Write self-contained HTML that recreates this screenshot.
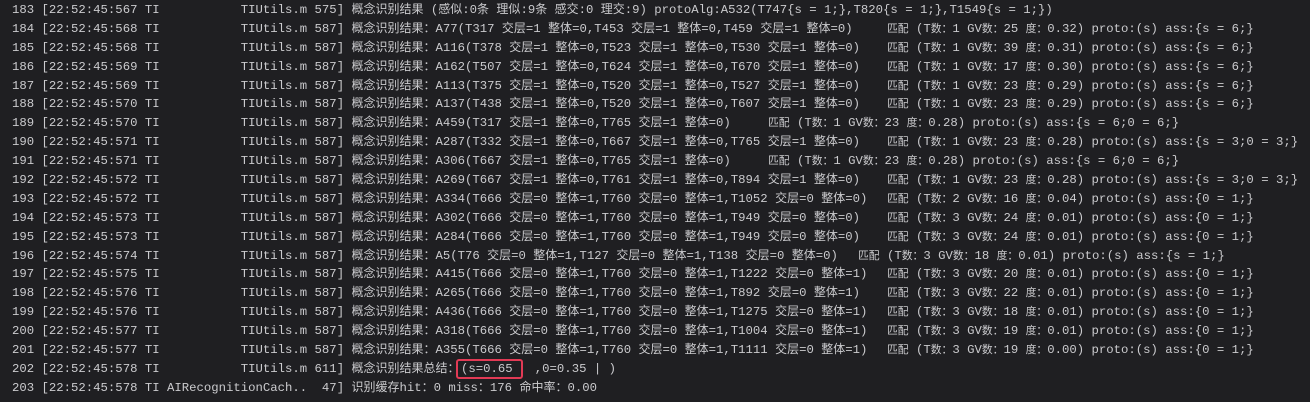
<!DOCTYPE html>
<html><head><meta charset="utf-8"><style>
html,body{margin:0;padding:0;background:#1f1f22;width:1310px;height:401px;overflow:hidden}
body{font-family:"Liberation Mono","Noto Sans CJK SC",monospace;font-size:12.3px;color:#cbcbce;padding-top:1px}
.l{position:relative;height:18.9px;line-height:18.9px;white-space:pre;padding-left:12px}
.r{position:absolute;top:0}
i{font-style:normal;font-size:12px}
.r i{font-size:10.8px}
.box{position:absolute;left:456px;top:359px;width:67px;height:20px;border:2px solid #e23a55;border-radius:3px;box-sizing:border-box}
</style></head><body>
<div class="l">183 [22:52:45:567 TI           TIUtils.m 575] <i>概念识别结果</i> (<i>感似</i>:0<i>条</i> <i>理似</i>:9<i>条</i> <i>感交</i>:0 <i>理交</i>:9) protoAlg:A532(T747{s = 1;},T820{s = 1;},T1549{s = 1;})</div>
<div class="l">184 [22:52:45:568 TI           TIUtils.m 587] <i>概念识别结果：</i>A77(T317 <i>交层</i>=1 <i>整体</i>=0,T453 <i>交层</i>=1 <i>整体</i>=0,T459 <i>交层</i>=1 <i>整体</i>=0)<span class="r" style="left:887px"><i>匹配</i> (T<i>数：</i>1 GV<i>数：</i>25 <i>度：</i>0.32) proto:(s) ass:{s = 6;}</span></div>
<div class="l">185 [22:52:45:568 TI           TIUtils.m 587] <i>概念识别结果：</i>A116(T378 <i>交层</i>=1 <i>整体</i>=0,T523 <i>交层</i>=1 <i>整体</i>=0,T530 <i>交层</i>=1 <i>整体</i>=0)<span class="r" style="left:887px"><i>匹配</i> (T<i>数：</i>1 GV<i>数：</i>39 <i>度：</i>0.31) proto:(s) ass:{s = 6;}</span></div>
<div class="l">186 [22:52:45:569 TI           TIUtils.m 587] <i>概念识别结果：</i>A162(T507 <i>交层</i>=1 <i>整体</i>=0,T624 <i>交层</i>=1 <i>整体</i>=0,T670 <i>交层</i>=1 <i>整体</i>=0)<span class="r" style="left:887px"><i>匹配</i> (T<i>数：</i>1 GV<i>数：</i>17 <i>度：</i>0.30) proto:(s) ass:{s = 6;}</span></div>
<div class="l">187 [22:52:45:569 TI           TIUtils.m 587] <i>概念识别结果：</i>A113(T375 <i>交层</i>=1 <i>整体</i>=0,T520 <i>交层</i>=1 <i>整体</i>=0,T527 <i>交层</i>=1 <i>整体</i>=0)<span class="r" style="left:887px"><i>匹配</i> (T<i>数：</i>1 GV<i>数：</i>23 <i>度：</i>0.29) proto:(s) ass:{s = 6;}</span></div>
<div class="l">188 [22:52:45:570 TI           TIUtils.m 587] <i>概念识别结果：</i>A137(T438 <i>交层</i>=1 <i>整体</i>=0,T520 <i>交层</i>=1 <i>整体</i>=0,T607 <i>交层</i>=1 <i>整体</i>=0)<span class="r" style="left:887px"><i>匹配</i> (T<i>数：</i>1 GV<i>数：</i>23 <i>度：</i>0.29) proto:(s) ass:{s = 6;}</span></div>
<div class="l">189 [22:52:45:570 TI           TIUtils.m 587] <i>概念识别结果：</i>A459(T317 <i>交层</i>=1 <i>整体</i>=0,T765 <i>交层</i>=1 <i>整体</i>=0)<span class="r" style="left:768px"><i>匹配</i> (T<i>数：</i>1 GV<i>数：</i>23 <i>度：</i>0.28) proto:(s) ass:{s = 6;0 = 6;}</span></div>
<div class="l">190 [22:52:45:571 TI           TIUtils.m 587] <i>概念识别结果：</i>A287(T332 <i>交层</i>=1 <i>整体</i>=0,T667 <i>交层</i>=1 <i>整体</i>=0,T765 <i>交层</i>=1 <i>整体</i>=0)<span class="r" style="left:887px"><i>匹配</i> (T<i>数：</i>1 GV<i>数：</i>23 <i>度：</i>0.28) proto:(s) ass:{s = 3;0 = 3;}</span></div>
<div class="l">191 [22:52:45:571 TI           TIUtils.m 587] <i>概念识别结果：</i>A306(T667 <i>交层</i>=1 <i>整体</i>=0,T765 <i>交层</i>=1 <i>整体</i>=0)<span class="r" style="left:768px"><i>匹配</i> (T<i>数：</i>1 GV<i>数：</i>23 <i>度：</i>0.28) proto:(s) ass:{s = 6;0 = 6;}</span></div>
<div class="l">192 [22:52:45:572 TI           TIUtils.m 587] <i>概念识别结果：</i>A269(T667 <i>交层</i>=1 <i>整体</i>=0,T761 <i>交层</i>=1 <i>整体</i>=0,T894 <i>交层</i>=1 <i>整体</i>=0)<span class="r" style="left:887px"><i>匹配</i> (T<i>数：</i>1 GV<i>数：</i>23 <i>度：</i>0.28) proto:(s) ass:{s = 3;0 = 3;}</span></div>
<div class="l">193 [22:52:45:572 TI           TIUtils.m 587] <i>概念识别结果：</i>A334(T666 <i>交层</i>=0 <i>整体</i>=1,T760 <i>交层</i>=0 <i>整体</i>=1,T1052 <i>交层</i>=0 <i>整体</i>=0)<span class="r" style="left:887px"><i>匹配</i> (T<i>数：</i>2 GV<i>数：</i>16 <i>度：</i>0.04) proto:(s) ass:{0 = 1;}</span></div>
<div class="l">194 [22:52:45:573 TI           TIUtils.m 587] <i>概念识别结果：</i>A302(T666 <i>交层</i>=0 <i>整体</i>=1,T760 <i>交层</i>=0 <i>整体</i>=1,T949 <i>交层</i>=0 <i>整体</i>=0)<span class="r" style="left:887px"><i>匹配</i> (T<i>数：</i>3 GV<i>数：</i>24 <i>度：</i>0.01) proto:(s) ass:{0 = 1;}</span></div>
<div class="l">195 [22:52:45:573 TI           TIUtils.m 587] <i>概念识别结果：</i>A284(T666 <i>交层</i>=0 <i>整体</i>=1,T760 <i>交层</i>=0 <i>整体</i>=1,T949 <i>交层</i>=0 <i>整体</i>=0)<span class="r" style="left:887px"><i>匹配</i> (T<i>数：</i>3 GV<i>数：</i>24 <i>度：</i>0.01) proto:(s) ass:{0 = 1;}</span></div>
<div class="l">196 [22:52:45:574 TI           TIUtils.m 587] <i>概念识别结果：</i>A5(T76 <i>交层</i>=0 <i>整体</i>=1,T127 <i>交层</i>=0 <i>整体</i>=1,T138 <i>交层</i>=0 <i>整体</i>=0)<span class="r" style="left:858px"><i>匹配</i> (T<i>数：</i>3 GV<i>数：</i>18 <i>度：</i>0.01) proto:(s) ass:{s = 1;}</span></div>
<div class="l">197 [22:52:45:575 TI           TIUtils.m 587] <i>概念识别结果：</i>A415(T666 <i>交层</i>=0 <i>整体</i>=1,T760 <i>交层</i>=0 <i>整体</i>=1,T1222 <i>交层</i>=0 <i>整体</i>=1)<span class="r" style="left:887px"><i>匹配</i> (T<i>数：</i>3 GV<i>数：</i>20 <i>度：</i>0.01) proto:(s) ass:{0 = 1;}</span></div>
<div class="l">198 [22:52:45:576 TI           TIUtils.m 587] <i>概念识别结果：</i>A265(T666 <i>交层</i>=0 <i>整体</i>=1,T760 <i>交层</i>=0 <i>整体</i>=1,T892 <i>交层</i>=0 <i>整体</i>=1)<span class="r" style="left:887px"><i>匹配</i> (T<i>数：</i>3 GV<i>数：</i>22 <i>度：</i>0.01) proto:(s) ass:{0 = 1;}</span></div>
<div class="l">199 [22:52:45:576 TI           TIUtils.m 587] <i>概念识别结果：</i>A436(T666 <i>交层</i>=0 <i>整体</i>=1,T760 <i>交层</i>=0 <i>整体</i>=1,T1275 <i>交层</i>=0 <i>整体</i>=1)<span class="r" style="left:887px"><i>匹配</i> (T<i>数：</i>3 GV<i>数：</i>18 <i>度：</i>0.01) proto:(s) ass:{0 = 1;}</span></div>
<div class="l">200 [22:52:45:577 TI           TIUtils.m 587] <i>概念识别结果：</i>A318(T666 <i>交层</i>=0 <i>整体</i>=1,T760 <i>交层</i>=0 <i>整体</i>=1,T1004 <i>交层</i>=0 <i>整体</i>=1)<span class="r" style="left:887px"><i>匹配</i> (T<i>数：</i>3 GV<i>数：</i>19 <i>度：</i>0.01) proto:(s) ass:{0 = 1;}</span></div>
<div class="l">201 [22:52:45:577 TI           TIUtils.m 587] <i>概念识别结果：</i>A355(T666 <i>交层</i>=0 <i>整体</i>=1,T760 <i>交层</i>=0 <i>整体</i>=1,T1111 <i>交层</i>=0 <i>整体</i>=1)<span class="r" style="left:887px"><i>匹配</i> (T<i>数：</i>3 GV<i>数：</i>19 <i>度：</i>0.00) proto:(s) ass:{0 = 1;}</span></div>
<div class="l">202 [22:52:45:578 TI           TIUtils.m 611] <i>概念识别结果总结：</i><span class="r" style="left:461px">(s=0.65   ,0=0.35 | )</span></div>
<div class="l">203 [22:52:45:578 TI AIRecognitionCach..  47] <i>识别缓存</i>hit<i>：</i>0 miss<i>：</i>176 <i>命中率：</i>0.00</div>
<div class="box"></div>
</body></html>
